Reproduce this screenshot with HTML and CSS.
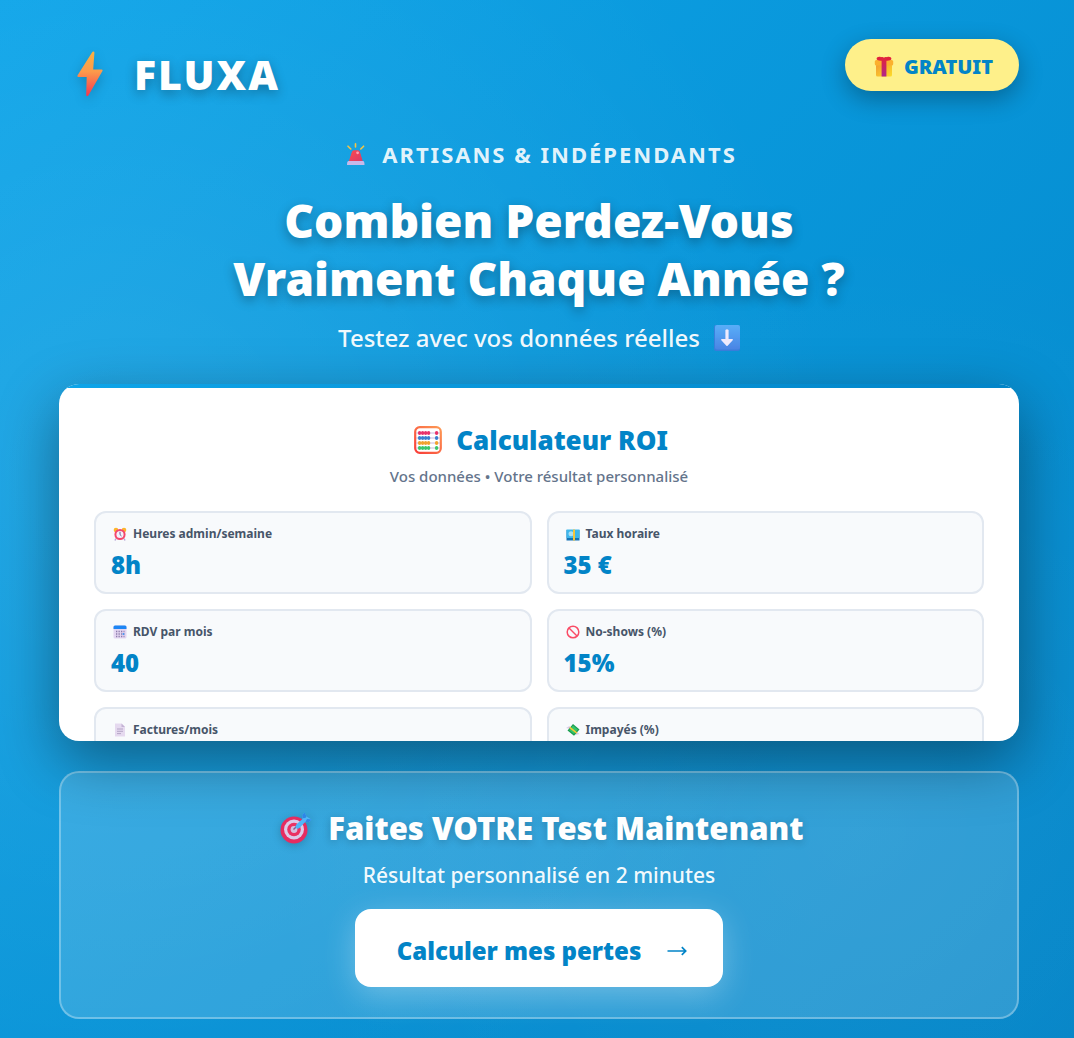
FILE: index.html
```html
<!DOCTYPE html>
<html lang="fr">
<head>
<meta charset="utf-8">
<meta name="viewport" content="width=device-width, initial-scale=1">
<title>Fluxa – Calculateur ROI</title>
<link rel="stylesheet" href="styles.css">
</head>
<body>
<div class="page">
  <header class="top">
    <div class="logo">
      <svg class="logo-icon" viewBox="0 0 26 46" aria-hidden="true">
        <defs><linearGradient id="bolt" x1="0" y1="0" x2="0" y2="1"><stop offset="0" stop-color="#f9b043"/><stop offset=".45" stop-color="#fc9a4b"/><stop offset="1" stop-color="#f6364f"/></linearGradient></defs>
        <path d="M15 1.6Q15.500 .5 16.400 .5 17.500 .5 17.400 1.800L16.200 18.500H24.500Q26.200 18.600 25.300 20.200L11.500 44.200Q10.800 45.300 9.900 45.100 9.100 44.900 9.200 43.700L9.700 26H1.500Q-.1 25.900 .6 24.300Z" fill="url(#bolt)"/>
      </svg>
      <span class="logo-name">FLUXA</span>
    </div>
    <div class="badge">
      <svg class="badge-icon" viewBox="0 0 20 21" aria-hidden="true">
        <defs><linearGradient id="box" x1="0" y1="0" x2="1" y2="1"><stop offset="0" stop-color="#f39b32"/><stop offset="1" stop-color="#fddc29"/></linearGradient><linearGradient id="ribbon" x1="0" y1="0" x2="0" y2="1"><stop offset="0" stop-color="#e2243c"/><stop offset="1" stop-color="#b0258b"/></linearGradient></defs>
        <rect x="2" y="8" width="16" height="12.500" rx="1.500" fill="url(#box)"/>
        <rect x=".8" y="4" width="18.400" height="5.500" rx="1.500" fill="#fbb02e"/>
        <path d="M10 4.500C7 4.800 3 5 2.600 3 2.400.8 5.500.2 7 1.200 8.500.6 9.500 1.200 10 1.800 10.500 1.200 11.500.6 13 1.200 14.500.2 17.600.8 17.400 3 17 5 13 4.800 10 4.500Z" fill="#e0213c"/>
        <rect x="7.600" y="2" width="4.800" height="18.500" fill="url(#ribbon)"/>
      </svg>
      <span>GRATUIT</span>
    </div>
  </header>

  <section class="hero">
    <p class="kicker">
      <svg class="kicker-icon" viewBox="0 0 20 22" aria-hidden="true">
        <defs><linearGradient id="lamp" x1="0" y1="0" x2="1" y2="1"><stop offset="0" stop-color="#fb4a4f"/><stop offset="1" stop-color="#d93a68"/></linearGradient></defs>
        <path d="M9.500 .8V4M2 3.200 4.800 6M17.600 3.200 14.800 6" stroke="#f4c544" stroke-width="1.600" stroke-linecap="round" fill="none"/>
        <path d="M6.500 8.500Q6.800 7.800 7.800 7.800H12Q13 7.800 13.300 8.500L16.300 18.500H3.300Z" fill="url(#lamp)" stroke="url(#lamp)" stroke-linejoin="round"/>
        <circle cx="11.600" cy="9.800" r="1.400" fill="#ff9fb0"/>
        <path d="M2.500 18H17Q18.500 18 18.500 22H1Q1 18 2.500 18Z" fill="#c6b9ea"/>
      </svg>
      <span>ARTISANS &amp; INDÉPENDANTS</span>
    </p>
    <h1 class="title">Combien Perdez-Vous<br>Vraiment Chaque Année ?</h1>
    <p class="lead">
      <span>Testez avec vos données réelles</span>
      <svg class="lead-icon" viewBox="0 0 26 26" aria-hidden="true">
        <defs><linearGradient id="key" x1="0" y1="0" x2="0" y2="1"><stop offset="0" stop-color="#58aef8"/><stop offset="1" stop-color="#4b86e6"/></linearGradient></defs>
        <rect width="26" height="26" rx="2" fill="#3a7fdc"/><rect x="1" width="25" height="24.500" rx="2" fill="url(#key)"/>
        <path d="M11.400 5Q13 3.600 14.600 5V14H18.500Q19.200 14.600 18.700 15.200L13.600 20.800Q13 21.300 12.400 20.800L7.300 15.200Q6.800 14.600 7.500 14H11.400Z" fill="#efeafd"/>
      </svg>
    </p>
  </section>

  <section class="card">
    <h2 class="card-title">
      <svg class="card-icon" viewBox="0 0 28 28" aria-hidden="true">
        <defs>
          <linearGradient id="frame" x1="0" y1="1" x2="1" y2="0"><stop offset="0" stop-color="#f93d38"/><stop offset="1" stop-color="#fd9a55"/></linearGradient>
          <g id="beads"><path d="M2 0H26" stroke="#c9b8dc" stroke-width="1"/><ellipse cx="5.600" rx="1.700" ry="2"/><ellipse cx="8.600" rx="1.700" ry="2"/><ellipse cx="11.600" rx="1.700" ry="2"/><ellipse cx="14.600" rx="1.700" ry="2"/><ellipse cx="22.600" rx="1.700" ry="2"/></g>
        </defs>
        <rect x="1.200" y="1.200" width="25.600" height="25.600" rx="4.500" fill="#fff" stroke="url(#frame)" stroke-width="2.200"/>
        <use href="#beads" y="7" fill="#e9326a"/><use href="#beads" y="12" fill="#3a7fd0"/><use href="#beads" y="17" fill="#f2a22e"/><use href="#beads" y="22" fill="#3cc66b"/>
      </svg>
      <span>Calculateur ROI</span>
    </h2>
    <p class="card-sub">Vos données • Votre résultat personnalisé</p>
    <dl class="fields">
      <div class="field">
        <dt><svg class="field-icon" viewBox="0 0 14 14" aria-hidden="true"><circle cx="3" cy="3" r="2.300" fill="#fdb52c"/><circle cx="11" cy="3" r="2.300" fill="#fdb52c"/><path d="M3 11.500 2 13.500M11 11.500 12 13.500" stroke="#b9a7d6" stroke-width="1.500"/><circle cx="7" cy="7.500" r="4.600" fill="#f4effb" stroke="#f4476c" stroke-width="2"/><path d="M7 4.800V7.600L8.500 9" stroke="#6c5a92" fill="none"/></svg>Heures admin/semaine</dt>
        <dd>8h</dd>
      </div>
      <div class="field">
        <dt><svg class="field-icon" viewBox="0 0 14 14" aria-hidden="true"><rect x=".5" y="3" width="13" height="10.500" fill="#1673b5"/><rect x=".5" y="2.500" width="13" height="8.500" fill="#3eb7ec"/><circle cx="5" cy="6.800" r="2.500" fill="#a9dff6"/><path d="M8 2.500V13.500" stroke="#f5c53b" stroke-width="2"/></svg>Taux horaire</dt>
        <dd>35 €</dd>
      </div>
      <div class="field">
        <dt><svg class="field-icon" viewBox="0 0 14 14" aria-hidden="true"><rect x=".5" y=".5" width="13" height="13" rx="1.500" fill="#e3d6f1"/><path d="M.5 4V2Q.5.5 2 .5H12Q13.500.5 13.500 2V4Z" fill="#1e86f4"/><path d="M3 6.500H11.500M3 9H11.500M3 11.500H11.500" stroke="#8d7bab" stroke-width="1.300" stroke-dasharray="1.300 1.200"/><path d="M9.700 9H11.200" stroke="#2492ff" stroke-width="1.500"/></svg>RDV par mois</dt>
        <dd>40</dd>
      </div>
      <div class="field">
        <dt><svg class="field-icon" viewBox="0 0 14 14" aria-hidden="true"><circle cx="7" cy="7" r="5.800" fill="none" stroke="#fa4c66" stroke-width="1.500"/><path d="M3 3 11 11" stroke="#fa4c66" stroke-width="1.500"/></svg>No-shows (%)</dt>
        <dd>15%</dd>
      </div>
      <div class="field">
        <dt><svg class="field-icon" viewBox="0 0 14 14" aria-hidden="true"><path d="M2 .5H8.500L12 4V13.500H2Z" fill="#e5d9ef"/><path d="M8.500 .5 12 4H8.500Z" fill="#c3b2d4"/><path d="M4 6H10M4 8.300H10M4 10.600H8" stroke="#b5a5c6"/></svg>Factures/mois</dt>
      </div>
      <div class="field">
        <dt><svg class="field-icon" viewBox="0 0 14 14" aria-hidden="true"><path d="M0 5 3.500 3 4.500 6ZM9 12 10.500 8.500 13.500 11Z" fill="#d8c9ea"/><path d="M7 1 13.500 6.500 8 12.800 1.500 7.500Z" fill="#1a9c50"/><path d="M7 2.500 11.800 6.500 8 11 3.200 7.300Z" fill="#35c56a"/><path d="M3.700 4.300 10.800 10" stroke="#fbc833" stroke-width="1.600"/></svg>Impayés (%)</dt>
      </div>
    </dl>
  </section>

  <section class="cta">
    <h2 class="cta-title">
      <svg class="cta-icon" viewBox="0 0 32 32" aria-hidden="true">
        <circle cx="14" cy="18" r="13.500" fill="#e62c60"/><circle cx="14" cy="17.500" r="10" fill="#dccbe9"/><circle cx="14" cy="17.500" r="6.800" fill="#ea3263"/><circle cx="14" cy="17.500" r="3.400" fill="#d5bfdf"/>
        <path d="M13.500 17.500 19 12" stroke="#7b5f93" stroke-width="1.400"/>
        <path d="M16 16Q14.600 14.500 16.300 12.500L22.500 7 22.200 3.200 24.500 .6 26.500 4.500 31.500 7.500 29 10 25 10.200 19.700 15.700Q17.500 17.500 16 16Z" fill="#4fb6f8"/><path d="M24.500 .6 26.500 4.500 25.300 6 22.600 6.200 22.200 3.200ZM31.500 7.500 29 10 25.400 10 27 7Z" fill="#2f86e6"/>
      </svg>
      <span>Faites VOTRE Test Maintenant</span>
    </h2>
    <p class="cta-sub">Résultat personnalisé en 2 minutes</p>
    <button class="cta-button" type="button">
      <span>Calculer mes pertes</span>
      <svg class="cta-arrow" viewBox="0 0 20 12" aria-hidden="true"><path d="M.5 6H18.500M14.800 2.200 18.700 6 14.800 9.800" fill="none" stroke="currentColor" stroke-width="1.700"/></svg>
    </button>
  </section>
</div>
</body>
</html>
```
FILE: styles.css
```css
* {
  box-sizing: border-box;
}

body {
  margin: 0;
  font-family: "Noto Sans", "Open Sans", sans-serif;
  color: #fff;
}

h1, h2, p, dl, dd {
  margin: 0;
}

svg {
  flex: none;
  display: block;
}

.page {
  height: 100vh;
  min-height: 920px;
  display: flex;
  flex-direction: column;
  padding: 39px 55px 19px 59px;
  background:
    radial-gradient(circle at 10% 45%, rgba(255, 255, 255, 0.1), transparent 65%),
    radial-gradient(circle at 80% 80%, rgba(255, 255, 255, 0.05), transparent 50%),
    linear-gradient(135deg, #0ea5e9, #0284c7);
}

.top {
  display: flex;
  justify-content: space-between;
  align-items: flex-start;
}

.logo {
  display: flex;
  align-items: center;
  gap: 31px;
  padding: 11px 18px 0;
}

.logo-icon {
  width: 26px;
  height: 46px;
  filter: drop-shadow(0 4px 6px rgba(0, 0, 0, 0.2));
}

.logo-name {
  font-size: 41px;
  line-height: 48px;
  font-weight: 900;
  letter-spacing: 2px;
  text-shadow: 0 4px 12px rgba(0, 0, 0, 0.3);
}

.badge {
  display: flex;
  align-items: center;
  gap: 10px;
  height: 52px;
  padding: 2px 26px 0 29px;
  border-radius: 26px;
  background: #fef08a;
  color: #0284c7;
  font-size: 20px;
  font-weight: 900;
  box-shadow: 0 8px 24px rgba(0, 0, 0, 0.3);
}

.badge-icon {
  width: 20px;
  height: 21px;
}

.hero {
  display: flex;
  flex-direction: column;
  align-items: center;
  padding-top: 41px;
  text-align: center;
}

.kicker {
  display: flex;
  align-items: center;
  gap: 16px;
  padding-left: 5px;
  font-size: 22px;
  line-height: 30px;
  font-weight: 700;
  letter-spacing: 2px;
  color: rgba(255, 255, 255, 0.9);
}

.kicker-icon {
  width: 20px;
  height: 22px;
}

.title {
  margin-top: 22px;
  font-size: 46px;
  line-height: 58px;
  font-weight: 900;
  text-shadow: 0 4px 12px rgba(0, 0, 0, 0.3);
}

.lead {
  display: flex;
  align-items: center;
  gap: 14px;
  margin-top: 13px;
  font-size: 24px;
  line-height: 36px;
  font-weight: 500;
  color: rgba(255, 255, 255, 0.95);
}

.lead-icon {
  width: 26px;
  height: 26px;
}

.card {
  position: relative;
  flex: 1 1 0;
  min-height: 0;
  margin-top: 28px;
  padding: 38px 35px 0;
  overflow: hidden;
  border-radius: 20px;
  background: #fff;
  box-shadow: 0 20px 60px rgba(0, 0, 0, 0.4);
}

.card::before {
  content: "";
  position: absolute;
  inset: 0 0 auto;
  height: 4px;
  background: linear-gradient(90deg, #0ea5e9, #0284c7);
}

.card-title {
  display: flex;
  justify-content: center;
  align-items: center;
  gap: 14px;
  padding-left: 4px;
  font-size: 26px;
  line-height: 36px;
  font-weight: 900;
  color: #0284c7;
}

.card-icon {
  width: 28px;
  height: 28px;
}

.card-sub {
  margin-top: 7px;
  font-size: 15px;
  line-height: 22px;
  font-weight: 500;
  text-align: center;
  color: #64748b;
}

.fields {
  display: grid;
  grid-template-columns: 1fr 1fr;
  gap: 15px;
  margin-top: 24px;
}

.field {
  min-height: 83px;
  padding: 12px 15px 11px;
  border: 2px solid #e2e8f0;
  border-radius: 12px;
  background: #f8fafc;
}

.field dt {
  display: flex;
  align-items: center;
  gap: 6px;
  padding-left: 2px;
  font-size: 12px;
  line-height: 18px;
  font-weight: 700;
  color: #475569;
}

.field-icon {
  width: 14px;
  height: 14px;
}

.field dd {
  margin-top: 6px;
  font-size: 24px;
  line-height: 32px;
  font-weight: 900;
  color: #0284c7;
}

.cta {
  display: flex;
  flex-direction: column;
  align-items: center;
  margin-top: 30px;
  padding: 34px 30px 30px;
  border: 2px solid rgba(255, 255, 255, 0.3);
  border-radius: 20px;
  background: rgba(255, 255, 255, 0.15);
  text-align: center;
}

.cta-title {
  display: flex;
  align-items: center;
  gap: 16px;
  padding-left: 6px;
  font-size: 31px;
  line-height: 42px;
  font-weight: 900;
  text-shadow: 0 2px 8px rgba(0, 0, 0, 0.2);
}

.cta-icon {
  width: 32px;
  height: 32px;
  filter: drop-shadow(0 2px 4px rgba(0, 0, 0, 0.2));
}

.cta-sub {
  margin-top: 10px;
  font-size: 21px;
  line-height: 32px;
  font-weight: 500;
  color: rgba(255, 255, 255, 0.95);
}

.cta-button {
  display: flex;
  align-items: center;
  gap: 26px;
  height: 78px;
  margin-top: 18px;
  padding: 6px 36px 0 42px;
  border: 0;
  border-radius: 16px;
  background: #fff;
  color: #0284c7;
  font: 900 24px/36px "Noto Sans", "Open Sans", sans-serif;
  cursor: pointer;
  box-shadow: 0 8px 32px rgba(255, 255, 255, 0.3);
}

.cta-arrow {
  width: 20px;
  height: 12px;
}
```
